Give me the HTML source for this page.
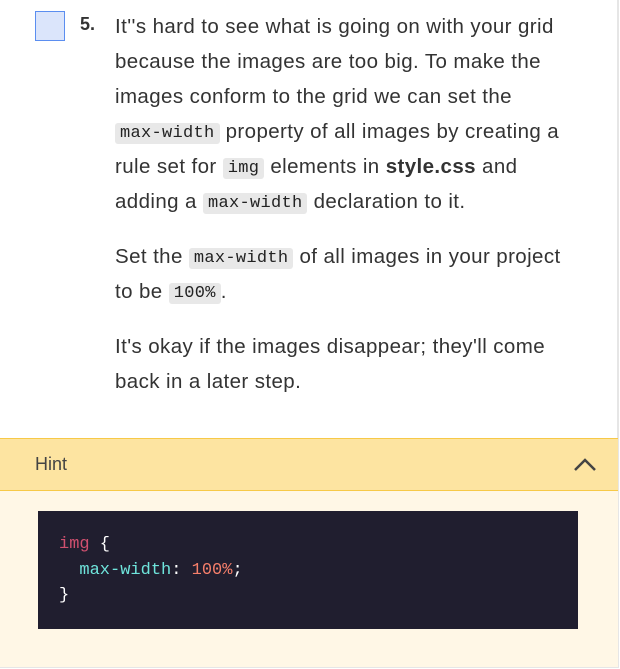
<!DOCTYPE html>
<html><head><style>
*{margin:0;padding:0;box-sizing:border-box}
body{width:620px;height:669px;background:#fff;font-family:"Liberation Sans",sans-serif;color:#333;position:relative;overflow:hidden}
.wrap{position:absolute;left:0;top:0;width:619px;height:668px;border-right:2px solid #e6e6e6;border-bottom:2px solid #e6e6e6}
.cb{position:absolute;left:35px;top:11px;width:30px;height:30px;background:#dbe5fb;border:1.5px solid #5b8ef0}
.num{position:absolute;left:80px;top:14px;font-weight:bold;font-size:18px;color:#333}
.txt{position:absolute;left:115px;top:9px;width:500px;font-size:20.5px;letter-spacing:0.4px;line-height:35px;color:#333;white-space:nowrap}
.txt p{margin-bottom:20px}
code{font-family:"Liberation Mono",monospace;font-size:17px;letter-spacing:0.3px;line-height:21px;display:inline-block;background:#e8e8e8;border-radius:3px;padding:0 5px;color:#222;vertical-align:1px}
.hint{position:absolute;left:0;top:438px;width:618px;height:53px;background:#fde4a1;border-top:1px solid #f7c948;border-bottom:1px solid #f7c948}
.hint span{position:absolute;left:35px;top:15px;font-size:18px;color:#444}
.body{position:absolute;left:0;top:491px;width:618px;height:176px;background:#fff7e6}
.code{position:absolute;left:38px;top:511px;width:540px;height:118px;background:#201e2f;font-family:"Liberation Mono",monospace;font-size:17px;line-height:25.5px;color:#fff;padding:21px 0 0 21px;white-space:pre}
.k{color:#d0506f}.p{color:#6fe5dc}.v{color:#f47e6a}
</style></head><body>
<div class="wrap"></div>
<div class="cb"></div>
<div class="num">5.</div>
<div class="txt">
<p>It''s hard to see what is going on with your grid<br>because the images are too big. To make the<br>images conform to the grid we can set the<br><code>max-width</code> property of all images by creating a<br>rule set for <code>img</code> elements in <b>style.css</b> and<br>adding a <code>max-width</code> declaration to it.</p>
<p>Set the <code>max-width</code> of all images in your project<br>to be <code>100%</code>.</p>
<p>It's okay if the images disappear; they'll come<br>back in a later step.</p>
</div>
<div class="hint"><span>Hint</span>
<svg style="position:absolute;left:573px;top:18px" width="24" height="16" viewBox="0 0 24 16"><path d="M2 13 L12 3 L22 13" fill="none" stroke="#444" stroke-width="2.5"/></svg></div>
<div class="body"></div>
<div class="code"><span class="k">img</span> {
  <span class="p">max-width</span>: <span class="v">100%</span>;
}</div>
</body></html>
